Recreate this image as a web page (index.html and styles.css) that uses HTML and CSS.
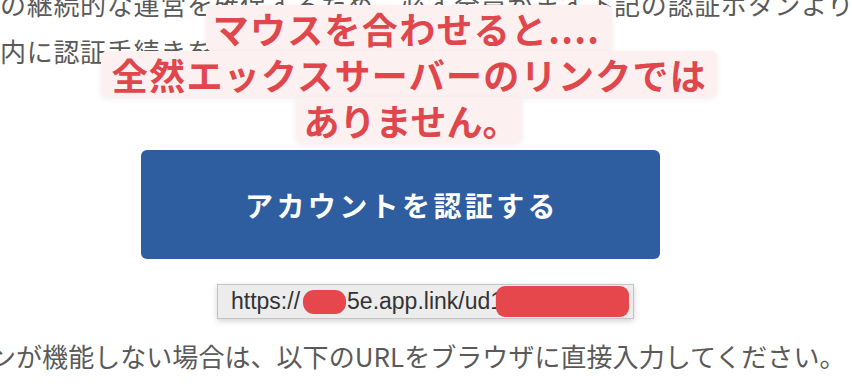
FILE: index.html
```html
<!DOCTYPE html>
<html lang="ja">
<head>
<meta charset="utf-8">
<link rel="stylesheet" href="styles.css">
</head>
<body>
<div class="page">
  <p class="intro">の継続的な運営を確保するため、必ず全員がまず下記の認証ボタンより<br>内に認証手続きを完了してください。</p>
  <a class="auth-btn">アカウントを認証する</a>
  <p class="note">ンが機能しない場合は、以下のURLをブラウザに直接入力してください。</p>

  <div class="callout">
    <div class="callout-line"><span class="callout-text callout-a">マウスを合わせると....</span></div>
    <div class="callout-line"><span class="callout-text">全然エックスサーバーのリンクでは</span></div>
    <div class="callout-line"><span class="callout-text callout-c">ありません。</span></div>
  </div>

  <div class="url-tip">
    <span class="url-part">https://</span><span class="redact redact-a"></span><span class="url-part">5e.app.link/ud1</span><span class="redact redact-b"></span>
  </div>
</div>
</body>
</html>
```
FILE: styles.css
```css
html, body {
  margin: 0;
  padding: 0;
  background: #ffffff;
}
body {
  width: 852px;
  height: 390px;
  overflow: hidden;
}
.page {
  position: relative;
  width: 852px;
  height: 390px;
  overflow: hidden;
  font-family: "Noto Sans CJK JP", "Noto Sans", sans-serif;
  color: #5a5a5a;
}
.intro {
  margin: -20px 0 0 0;
  font-size: 26px;
  line-height: 47px;
  letter-spacing: 0.7px;
  white-space: nowrap;
}
.auth-btn {
  display: flex;
  align-items: center;
  justify-content: center;
  width: 519px;
  height: 109px;
  margin: 76px 0 0 141px;
  background: #2e5e9f;
  border-radius: 6px;
  color: #ffffff;
  font-size: 28px;
  font-weight: 700;
  letter-spacing: 3.4px;
  text-indent: 3px;
}
.note {
  margin: 73px 0 0 -10px;
  font-size: 26px;
  line-height: 47px;
  letter-spacing: 0.05px;
  white-space: nowrap;
}
.callout {
  position: absolute;
  top: 5px;
  left: 0;
  width: 818px;
  display: flex;
  flex-direction: column;
  align-items: center;
}
.callout-line {
  display: flex;
  justify-content: center;
}
.callout-text {
  display: inline-block;
  padding: 0 10px 0 11px;
  background: #fdf0f0;
  border-radius: 6px;
  box-shadow: 0 2px 6px rgba(0, 0, 0, 0.07);
  color: #e0474c;
  font-size: 36px;
  font-weight: 700;
  line-height: 46px;
  letter-spacing: 1.3px;
  white-space: nowrap;
}
.callout-a {
  padding: 0 12px 0 7px;
}
.callout-c {
  padding: 0 4px 0 8px;
  letter-spacing: 0;
}
.url-tip {
  position: absolute;
  top: 284px;
  left: 217px;
  display: flex;
  align-items: center;
  padding-left: 13px;
  box-sizing: border-box;
  width: 417px;
  height: 35px;
  background: #ececec;
  border: 1px solid #c4c4c4;
  box-shadow: 0 2px 6px rgba(0, 0, 0, 0.18);
  font-family: "Liberation Sans", Arial, sans-serif;
  font-size: 23px;
  color: #333333;
  overflow: hidden;
  white-space: nowrap;
}
.url-part {
  flex: none;
}
.redact {
  flex: none;
  background: #e5474d;
}
.redact-a {
  width: 43px;
  height: 24px;
  margin-left: 3px;
  margin-right: 1px;
  border-radius: 11px;
}
.redact-b {
  width: 133px;
  height: 31px;
  margin-left: -7px;
  border-radius: 9px;
}
```
